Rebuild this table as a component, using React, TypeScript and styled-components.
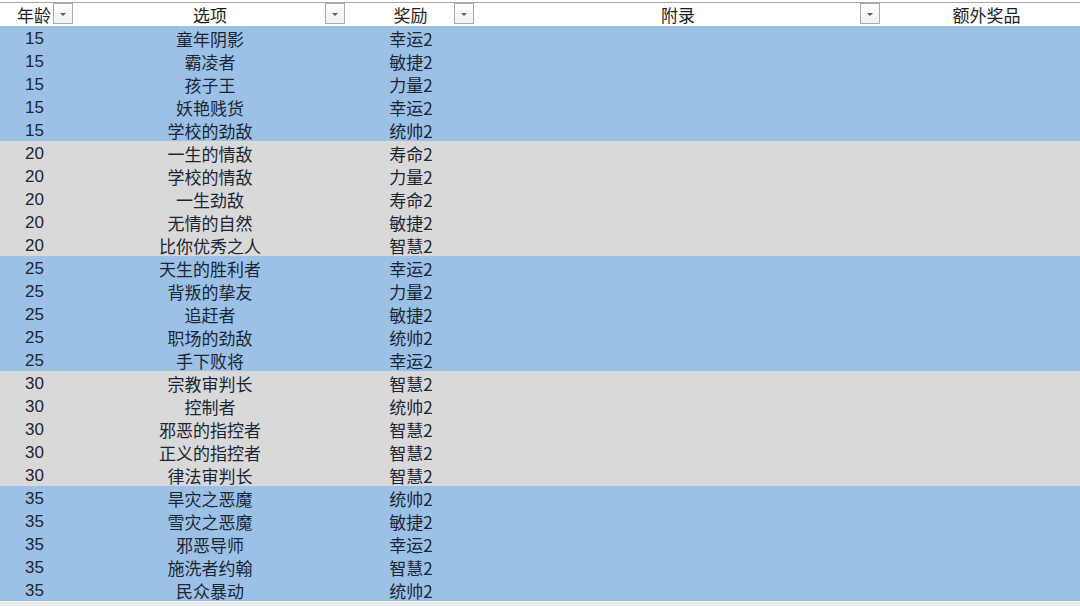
import React from "react";
import styled, { createGlobalStyle } from "styled-components";

const GlobalStyle = createGlobalStyle`
  html, body {
    margin: 0;
    padding: 0;
    background: #ececec;
    overflow: hidden;
  }
  body {
    font-family: "Noto Sans CJK SC", "Noto Sans", sans-serif;
  }
`;

const COLS = "74px 272px 129px 406px 211px";

const Sheet = styled.div`
  width: 1080px;
  overflow: hidden;
`;

const HeaderRow = styled.div`
  display: grid;
  grid-template-columns: ${COLS};
  background: #ffffff;
  padding-top: 2px;
  height: 24px;
  box-sizing: content-box;
`;

const HeaderCell = styled.div<{ $shift?: number }>`
  position: relative;
  height: 23px;
  border-top: 1px solid #a6a6a6;
  display: flex;
  align-items: center;
  justify-content: center;
  padding-right: ${(p) => p.$shift ?? 0}px;
  font-size: 17px;
  line-height: 23px;
  color: #1e1e1e;
  white-space: nowrap;
`;

const FilterButton = styled.span`
  position: absolute;
  right: 1px;
  top: 0px;
  width: 20px;
  height: 21px;
  box-sizing: border-box;
  border: 1px solid #a9a9a9;
  background: linear-gradient(#ffffff, #f0f0f0);
  display: flex;
  align-items: center;
  justify-content: center;
  &::after {
    content: "";
    display: block;
    width: 0;
    height: 0;
    border-left: 3px solid transparent;
    border-right: 3px solid transparent;
    border-top: 3px solid #5a5a5a;
    margin-top: 1px;
  }
`;

const DataRow = styled.div<{ $band: "blue" | "gray" }>`
  display: grid;
  grid-template-columns: ${COLS};
  height: 23px;
  background: ${(p) => (p.$band === "blue" ? "#9bc2e6" : "#d9d9d9")};
`;

const Cell = styled.div`
  display: flex;
  align-items: center;
  justify-content: center;
  font-size: 17px;
  line-height: 23px;
  padding-top: 1px;
  color: #1c2633;
  white-space: nowrap;
  overflow: hidden;
`;

const AgeCell = styled(Cell)`
  justify-content: flex-start;
  padding-left: 25px;
  font-family: "Liberation Sans", "Noto Sans CJK SC", sans-serif;
  font-size: 17px;
`;

const RewardCell = styled(Cell)`
  padding-left: 1px;
`;

const headers = ["年龄", "选项", "奖励", "附录", "额外奖品"];

type Row = [number, string, string];

const rows: Row[] = [
  [15, "童年阴影", "幸运2"],
  [15, "霸凌者", "敏捷2"],
  [15, "孩子王", "力量2"],
  [15, "妖艳贱货", "幸运2"],
  [15, "学校的劲敌", "统帅2"],
  [20, "一生的情敌", "寿命2"],
  [20, "学校的情敌", "力量2"],
  [20, "一生劲敌", "寿命2"],
  [20, "无情的自然", "敏捷2"],
  [20, "比你优秀之人", "智慧2"],
  [25, "天生的胜利者", "幸运2"],
  [25, "背叛的挚友", "力量2"],
  [25, "追赶者", "敏捷2"],
  [25, "职场的劲敌", "统帅2"],
  [25, "手下败将", "幸运2"],
  [30, "宗教审判长", "智慧2"],
  [30, "控制者", "统帅2"],
  [30, "邪恶的指控者", "智慧2"],
  [30, "正义的指控者", "智慧2"],
  [30, "律法审判长", "智慧2"],
  [35, "旱灾之恶魔", "统帅2"],
  [35, "雪灾之恶魔", "敏捷2"],
  [35, "邪恶导师", "幸运2"],
  [35, "施洗者约翰", "智慧2"],
  [35, "民众暴动", "统帅2"],
];

export default function App() {
  return (
    <>
      <GlobalStyle />
      <Sheet>
        <HeaderRow>
          {headers.map((h, i) => (
            <HeaderCell key={h} $shift={i === 0 ? 6 : 0}>
              {h}
              {i < 4 && <FilterButton />}
            </HeaderCell>
          ))}
        </HeaderRow>
        {rows.map(([age, option, reward], i) => (
          <DataRow key={i} $band={(age / 5) % 2 === 1 ? "blue" : "gray"}>
            <AgeCell>{age}</AgeCell>
            <Cell>{option}</Cell>
            <RewardCell>{reward}</RewardCell>
            <Cell />
            <Cell />
          </DataRow>
        ))}
      </Sheet>
    </>
  );
}
